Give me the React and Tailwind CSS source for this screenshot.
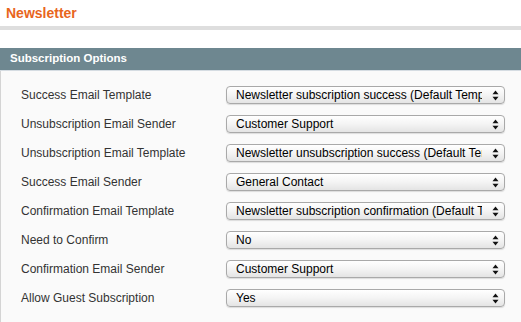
import React from "react";

const rows = [
  ["Success Email Template", "Newsletter subscription success (Default Template from Locale)"],
  ["Unsubscription Email Sender", "Customer Support"],
  ["Unsubscription Email Template", "Newsletter unsubscription success (Default Template from Locale)"],
  ["Success Email Sender", "General Contact"],
  ["Confirmation Email Template", "Newsletter subscription confirmation (Default Template from Locale)"],
  ["Need to Confirm", "No"],
  ["Confirmation Email Sender", "Customer Support"],
  ["Allow Guest Subscription", "Yes"],
];

function Arrows() {
  return (
    <svg width="7" height="11" viewBox="0 0 7 11" className="shrink-0">
      <path d="M3.5 0.5 L6.5 4.3 L0.5 4.3 Z" fill="#111" />
      <path d="M3.5 10.5 L6.5 6.7 L0.5 6.7 Z" fill="#111" />
    </svg>
  );
}

function Select({ value }) {
  return (
    <div className="w-[279px] h-[18px] flex items-center rounded-[4px] border border-[#a9a9a9] bg-gradient-to-b from-white via-[#f4f4f4] to-[#e4e4e4] shadow-[0_1px_1px_rgba(0,0,0,0.12)] pl-[9px] pr-[5px]">
      <div className="flex-1 overflow-hidden whitespace-nowrap text-[12px] leading-[16px] text-black mr-[10px]">
        {value}
      </div>
      <Arrows />
    </div>
  );
}

export default function App() {
  return (
    <div className="w-[521px] h-[322px] bg-white overflow-hidden" style={{ fontFamily: '"Liberation Sans", Arial, Helvetica, sans-serif' }}>
      <div className="h-[26px] flex items-start pt-[4px] pl-[6px]">
        <span className="text-[14px] leading-[18px] font-bold text-[#e8651c]">Newsletter</span>
      </div>
      <div className="h-[4px] bg-[#dedede]" />
      <div className="h-[18px]" />
      <div className="h-[22px] bg-[#6e8790] flex items-center pl-[10px]">
        <span className="text-[11.5px] font-bold text-white">Subscription Options</span>
      </div>
      <div className="h-[1px] bg-[#d5dce2]" />
      <div className="bg-[#fafafa] border-l border-[#d4d4d4] pt-[15px] flex flex-col gap-[11px]">
        {rows.map(([label, value]) => (
          <div key={label} className="flex items-center h-[18px]">
            <div className="w-[225px] pl-[20px] text-[12px] text-[#333]">{label}</div>
            <Select value={value} />
          </div>
        ))}
        <div className="h-[20px]" />
      </div>
    </div>
  );
}
